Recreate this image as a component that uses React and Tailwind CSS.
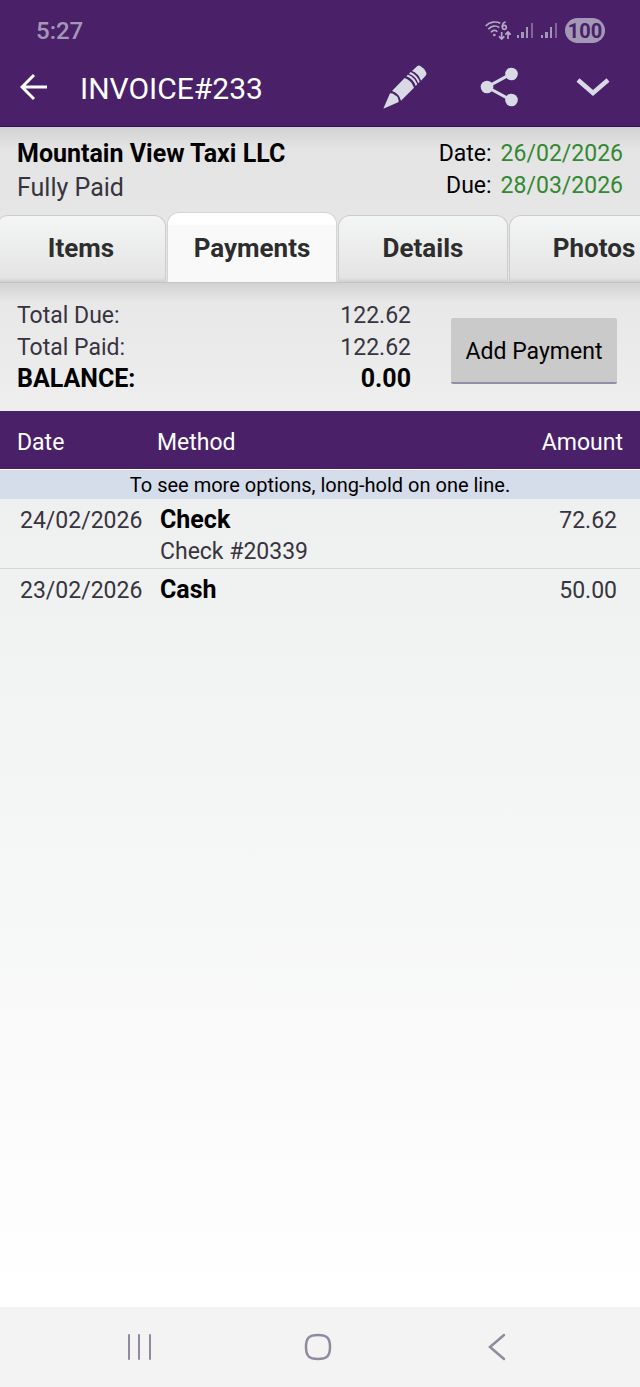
import React, { useState } from "react";

const tabs = ["Items", "Payments", "Details", "Photos"];

const payments = [
  { id: 1, date: "24/02/2026", method: "Check", note: "Check #20339", amount: "72.62" },
  { id: 2, date: "23/02/2026", method: "Cash", note: "", amount: "50.00" },
];

function SignalIcon() {
  return (
    <svg className="h-5 w-4" viewBox="0 0 16 20" fill="#a398b5">
      <rect x="0" y="14" width="2" height="3" />
      <rect x="4" y="11" width="3" height="6" />
      <rect x="9" y="6" width="2" height="11" />
      <rect x="14" y="2" width="2" height="15" opacity="0.6" />
    </svg>
  );
}

function WifiIcon() {
  return (
    <svg className="h-5 w-7" viewBox="0 0 84 60" fill="none" stroke="#b3a9c2" strokeWidth="5">
      <path d="M2 15C13 2 33 0 46 7" />
      <path d="M10 25C18 14 33 12 43 20" />
      <path d="M18 34C22 27 32 26 37 32" />
      <circle cx="28" cy="42" r="4" fill="#b3a9c2" stroke="none" />
      <path d="M62 3C54 4 52 11 52 18" />
      <circle cx="58" cy="19" r="6" />
      <path d="M50 33V54M42 46L50 54L58 46M69 54V33M61 41L69 33L77 41" />
    </svg>
  );
}

function StatusBar() {
  return (
    <div className="flex h-[61px] items-center justify-between pr-[35px] pl-9">
      <span className="text-2xl font-medium text-[#a398b5]">5:27</span>
      <div className="flex items-center">
        <WifiIcon />
        <div className="ml-1 flex gap-2">
          <SignalIcon />
          <SignalIcon />
        </div>
        <span className="ml-2 flex h-[25px] w-10 items-center justify-center rounded-full bg-[#a398b5] text-xl font-bold text-[#4a2169]">
          100
        </span>
      </div>
    </div>
  );
}

function PencilIcon() {
  return (
    <svg className="size-11" viewBox="0 0 132 132" fill="#d8dbe6">
      <path d="M1 131L21 85Q31 84 36 91Q47 94 47 111z" />
      <path d="M27 78L65 39Q85 46 93 68L54 107Q49 86 27 78z" />
      <path d="M70 34Q91 42 98 63L103 58Q95 37 75 29z" />
      <path d="M78 26Q99 34 106 55L110 50Q102 30 83 21z" />
      <path d="M87 18L103 3Q107 0 112 3Q125 10 130 23Q131 28 129 31L114 47Q107 26 87 18z" />
    </svg>
  );
}

function ShareIcon() {
  return (
    <svg className="size-10" viewBox="0 0 40 40" fill="#d8dbe6">
      <path d="M32 7L8 20l24 13" fill="none" stroke="#d8dbe6" strokeWidth="3" />
      <circle cx="32.500" cy="7" r="6.300" />
      <circle cx="8" cy="20" r="6.300" />
      <circle cx="32.500" cy="33" r="6.300" />
    </svg>
  );
}

function Toolbar() {
  return (
    <div className="flex h-[66px] items-center border-b border-[#35134f] pb-[14px]">
      <button type="button" aria-label="Back" className="flex w-20 justify-start pl-5">
        <svg className="h-7 w-[27px]" viewBox="0 0 27 28" fill="none" stroke="#fff" strokeWidth="3">
          <path d="M27 14H2M14 2L2 14l12 12" />
        </svg>
      </button>
      <h1 className="flex-1 pt-1 text-[30px] leading-9 text-white">INVOICE#233</h1>
      <button type="button" aria-label="Edit" className="flex w-[94px] justify-center">
        <PencilIcon />
      </button>
      <button type="button" aria-label="Share" className="flex w-[94px] justify-center">
        <ShareIcon />
      </button>
      <button type="button" aria-label="More" className="flex w-[94px] justify-center">
        <svg className="h-5 w-9" viewBox="0 0 36 20" fill="none" stroke="#d8dbe6" strokeWidth="4.500">
          <path d="M3 3l15 13L33 3" />
        </svg>
      </button>
    </div>
  );
}

function InvoiceInfo() {
  return (
    <section className="flex h-[85px] justify-between bg-linear-to-b from-[#d2d2d2] via-[#e4e4e4] via-25% to-[#e6e6e6] px-[17px]">
      <div className="pt-[10px] text-[25px] leading-[34px]">
        <p className="font-bold text-black">Mountain View Taxi LLC</p>
        <p>Fully Paid</p>
      </div>
      <dl className="grid auto-rows-min grid-cols-[auto_auto] gap-x-[9px] pt-[11px] text-right text-black">
        <dt>Date:</dt>
        <dd className="text-[#338833]">26/02/2026</dd>
        <dt>Due:</dt>
        <dd className="text-[#338833]">28/03/2026</dd>
      </dl>
    </section>
  );
}

function TabBar({ active, onSelect }) {
  return (
    <div className="overflow-hidden border-b border-[#c4c4c4] bg-[#e6e6e6]">
      <div role="tablist" className="-ml-1 flex h-[70px] items-end gap-px">
        {tabs.map((tab) => (
          <button
            key={tab}
            type="button"
            role="tab"
            aria-selected={tab === active}
            onClick={() => onSelect(tab)}
            className={
              tab === active
                ? "h-[70px] w-[170px] shrink-0 rounded-t-xl border border-b-0 border-[#d4d4d4] bg-linear-to-b from-white from-18% to-[#f9f9f9] to-18% text-[26px] font-bold text-[#2d2d2d]"
                : "h-[67px] w-[170px] shrink-0 rounded-t-xl border border-b-0 border-[#cccccc] bg-linear-to-b from-[#f4f5f5] via-[#e4e4e4] via-93% to-[#d0d0d0] pb-[3px] text-[26px] font-bold text-[#2d2d2d]"
            }
          >
            {tab}
          </button>
        ))}
      </div>
    </div>
  );
}

function Summary() {
  return (
    <section className="flex h-[128px] items-start bg-linear-to-b from-[#d2d2d2] via-[#e8e8e8] via-15% to-[#eeeeee] pt-[17px] pr-[23px] pl-[17px]">
      <dl className="grid flex-1 grid-cols-[1fr_auto]">
        <dt>Total Due:</dt>
        <dd className="text-right">122.62</dd>
        <dt>Total Paid:</dt>
        <dd className="text-right">122.62</dd>
        <dt className="text-[25px] leading-[30px] font-bold text-black">BALANCE:</dt>
        <dd className="text-right text-[25px] leading-[30px] font-bold text-black">0.00</dd>
      </dl>
      <button
        type="button"
        className="mt-[18px] ml-10 h-[66px] w-[166px] rounded-xs border-b-2 border-[#958da5] bg-[#cacaca] pt-1 text-black"
      >
        Add Payment
      </button>
    </section>
  );
}

function PaymentTable() {
  return (
    <table className="w-full table-fixed border-collapse">
      <thead>
        <tr className="h-[58px] bg-[#4a2169] text-left text-white">
          <th scope="col" className="w-[157px] pt-[6px] pl-[17px] font-normal">Date</th>
          <th scope="col" className="pt-[6px] font-normal">Method</th>
          <th scope="col" className="w-[140px] pt-[6px] pr-[17px] text-right font-normal">Amount</th>
        </tr>
      </thead>
      <tbody>
        <tr className="bg-[#d5dcea] text-black">
          <td colSpan={3} className="border-t border-white pt-px text-center text-xl leading-7">
            To see more options, long-hold on one line.
          </td>
        </tr>
        {payments.map((payment) => (
          <tr key={payment.id} className="border-b border-[#d6d6d6] align-top last:border-b-0">
            <td className="pt-[6px] pl-5">{payment.date}</td>
            <td className="pt-[5px] pl-[3px]">
              <p className="text-[25px] leading-8 font-bold text-black">{payment.method}</p>
              {payment.note && <p>{payment.note}</p>}
            </td>
            <td className="pt-[6px] pr-[23px] text-right">{payment.amount}</td>
          </tr>
        ))}
      </tbody>
    </table>
  );
}

function NavBar() {
  return (
    <nav className="flex h-20 items-center justify-center gap-[151px] bg-[#f3f3f3] pr-1">
      <button type="button" aria-label="Recent apps">
        <svg className="size-7" viewBox="0 0 28 28" fill="none" stroke="#918a9e" strokeWidth="2" strokeLinecap="round">
          <path d="M4 2v24M14 2v24M25 2v24" />
        </svg>
      </button>
      <button type="button" aria-label="Home">
        <svg className="size-7" viewBox="0 0 28 28" fill="none" stroke="#918a9e" strokeWidth="2.500">
          <path d="M14 2c9 0 12 3 12 12s-3 12-12 12S2 23 2 14 5 2 14 2z" />
        </svg>
      </button>
      <button type="button" aria-label="Back">
        <svg className="size-7" viewBox="0 0 28 28" fill="none" stroke="#918a9e" strokeWidth="2.500" strokeLinecap="round">
          <path d="M21 2L7 14l14 12" />
        </svg>
      </button>
    </nav>
  );
}

export default function App() {
  const [activeTab, setActiveTab] = useState("Payments");

  return (
    <div className="flex min-h-screen flex-col font-['Roboto',sans-serif] text-[23px] leading-8 text-[#38343f]">
      <header className="bg-[#4a2169]">
        <StatusBar />
        <Toolbar />
      </header>
      <InvoiceInfo />
      <TabBar active={activeTab} onSelect={setActiveTab} />
      <Summary />
      <main className="flex-1 bg-linear-to-b from-[#eeeeee] via-[#f0f1f1] via-20% to-white">
        <PaymentTable />
      </main>
      <NavBar />
    </div>
  );
}
